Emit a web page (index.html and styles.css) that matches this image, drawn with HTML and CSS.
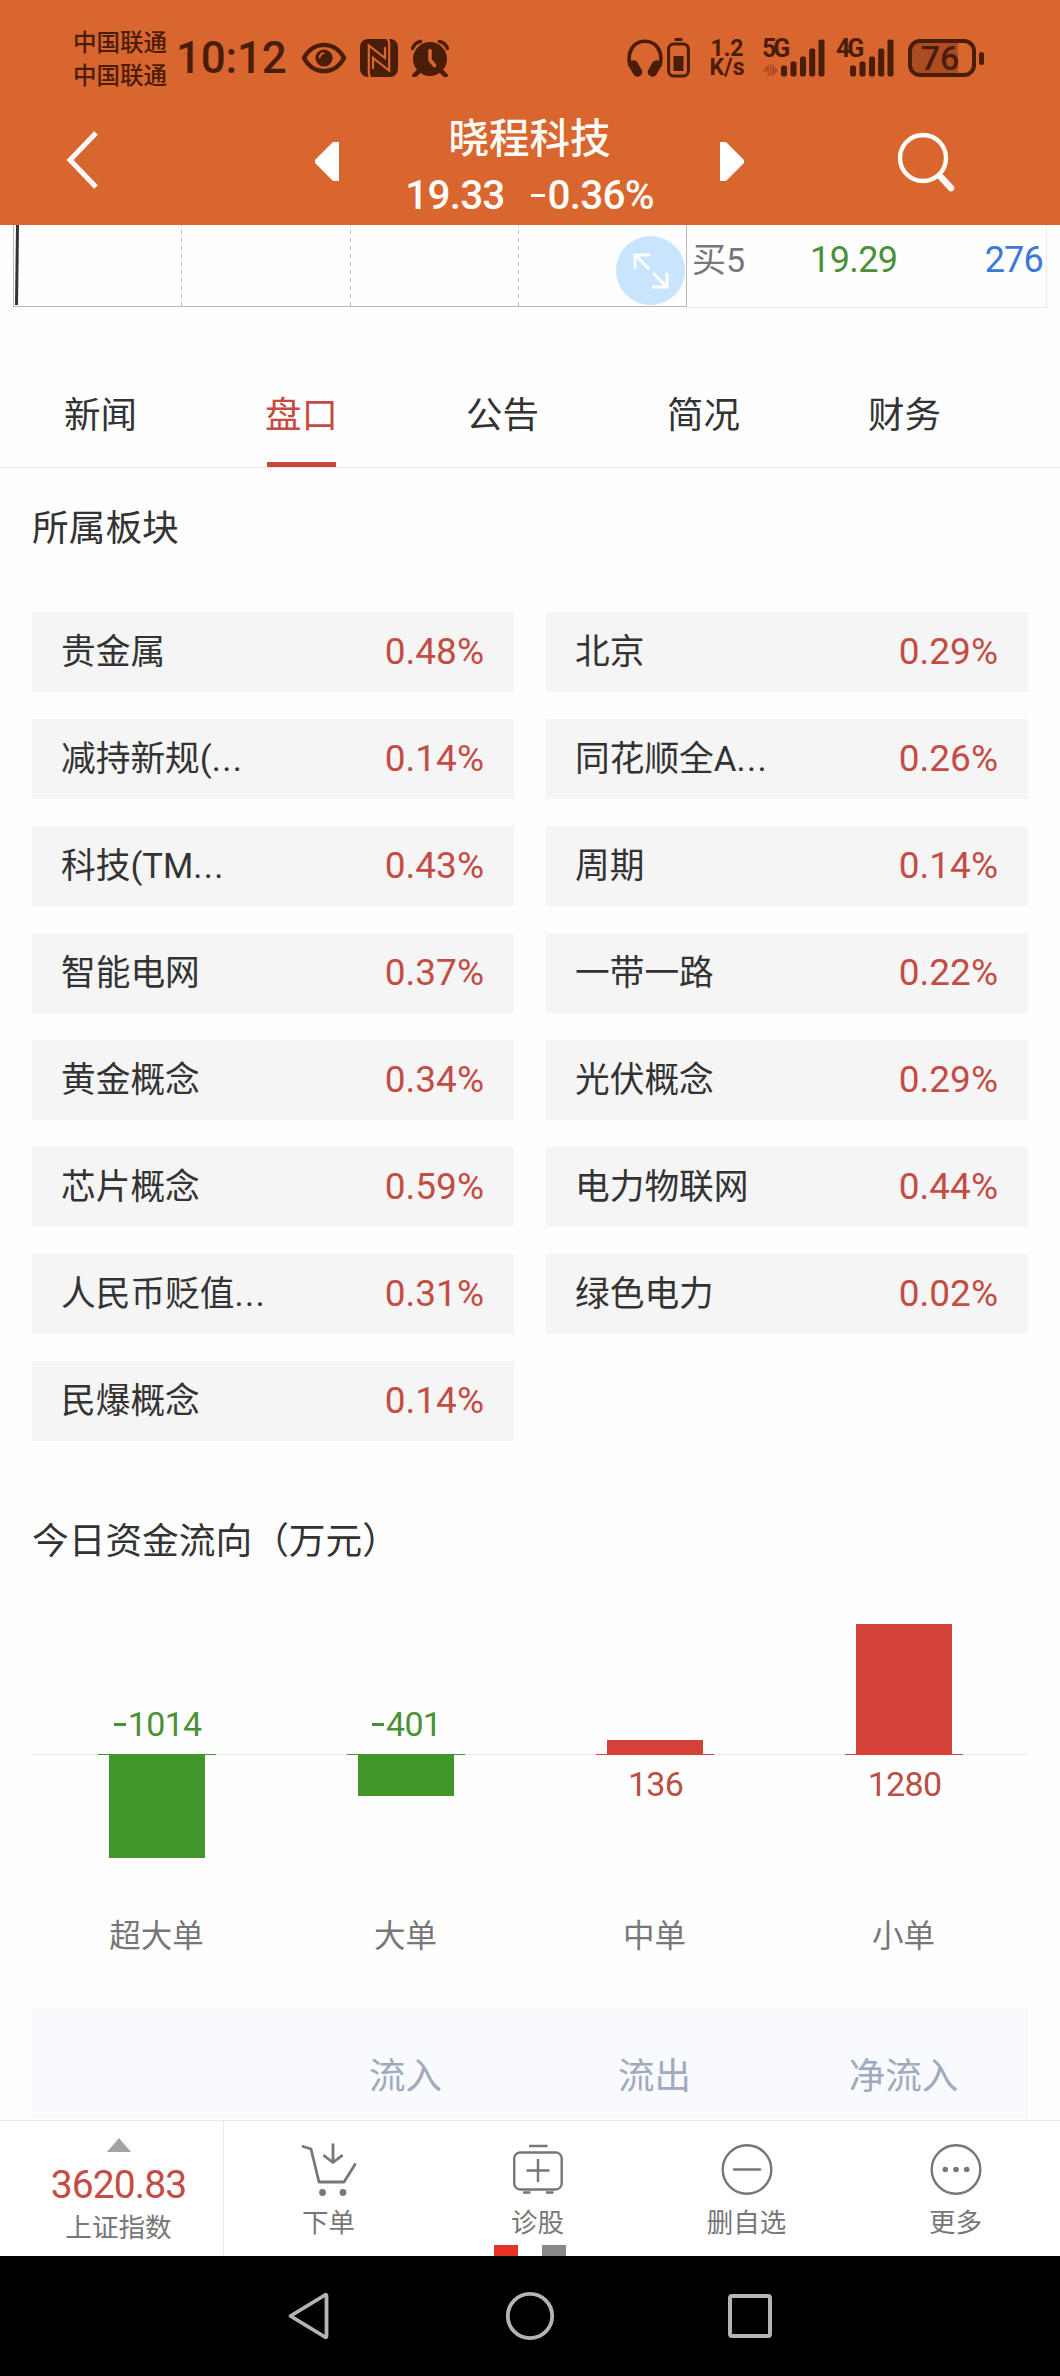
FILE: index.html
```html
<!DOCTYPE html>
<html lang="zh-CN">
<head>
<meta charset="utf-8">
<title>晓程科技</title>
<link rel="stylesheet" href="styles.css">
</head>
<body>
<header class="header">
  <div class="status">
    <div class="carriers"><span>中国联通</span><span>中国联通</span></div>
    <div class="clock">10:12</div>
    <svg class="ic-eye" width="46" height="32" viewBox="0 0 46 32">
      <path d="M3 16C12-1.5 34-1.5 43 16C34 33.5 12 33.5 3 16Z" fill="none" stroke="currentColor" stroke-width="4.4" stroke-linejoin="round"/>
      <circle cx="23" cy="16" r="8.6" fill="currentColor"/>
      <path d="M18.6 15.4q.6-3.600 4-4.200" fill="none" stroke="#d9652f" stroke-width="1.800" stroke-linecap="round"/>
    </svg>
    <svg class="ic-nfc" width="38" height="38" viewBox="0 0 38 38">
      <rect width="38" height="38" rx="8" fill="currentColor"/>
      <path d="M10.500 38.500Q8.800 37 8.800 33V6.500L25 19V8" fill="none" stroke="#d9652f" stroke-width="2.200"/>
      <path d="M27-.5Q29.200 1 29.200 5V31.500L13 19V30" fill="none" stroke="#d9652f" stroke-width="2.200"/>
    </svg>
    <svg class="ic-alarm" width="38" height="38" viewBox="0 0 38 38">
      <circle cx="19" cy="20" r="17" fill="currentColor"/>
      <path d="M7 33l-3.500 3.500M31 33l3.500 3.500" stroke="currentColor" stroke-width="4.600" stroke-linecap="round"/>
      <path d="M1.500 9.500Q3.500 4 9.500 2.500M36.500 9.500Q34.500 4 28.500 2.500" fill="none" stroke="currentColor" stroke-width="3.400" stroke-linecap="round"/>
      <path d="M19 11.500V21l4.500 5.500" fill="none" stroke="#d9652f" stroke-width="3.600" stroke-linecap="round" stroke-linejoin="round"/>
    </svg>
    <svg class="ic-phones" width="36" height="38" viewBox="0 0 36 38">
      <path d="M3 27C-.5 12 7 2.200 18 2.200S36.500 12 33 27" fill="none" stroke="currentColor" stroke-width="3.600"/>
      <path d="M6.500 26l4 7M29.500 26l-4 7" stroke="currentColor" stroke-width="9.500" stroke-linecap="round"/>
    </svg>
    <svg class="ic-cell" width="23" height="40" viewBox="0 0 23 40">
      <rect x="7.500" width="8" height="3" rx="1.200" fill="currentColor"/>
      <rect x="1.600" y="6" width="19.800" height="32" rx="5" fill="none" stroke="currentColor" stroke-width="3"/>
      <rect x="6.500" y="18" width="10" height="15" fill="currentColor"/>
    </svg>
    <div class="speed"><span>1.2</span><span>K/s</span></div>
    <div class="signal signal-5g">
      <span class="gen">5G</span>
      <svg width="62" height="38" viewBox="0 0 62 38">
        <path d="M0 31l6-6v12H4.500v-4.500H0zM15 31.500L9 25v12.500zM7 25h1.500v12H7z" fill="#b04e22"/>
        <g fill="currentColor"><rect x="18" y="26.500" width="6" height="11" rx="2"/><rect x="27.500" y="22.500" width="6" height="15" rx="2"/><rect x="37" y="17.500" width="6" height="20" rx="2"/><rect x="46.200" y="9.500" width="6" height="28" rx="2"/><rect x="55.500" y=".5" width="6" height="37" rx="2"/></g>
      </svg>
    </div>
    <div class="signal signal-4g">
      <span class="gen">4G</span>
      <svg width="62" height="38" viewBox="5 0 62 38">
        <g fill="currentColor"><rect x="18" y="26.500" width="6" height="11" rx="2"/><rect x="27.500" y="22.500" width="6" height="15" rx="2"/><rect x="37" y="17.500" width="6" height="20" rx="2"/><rect x="46.200" y="9.500" width="6" height="28" rx="2"/><rect x="55.500" y=".5" width="6" height="37" rx="2"/></g>
      </svg>
    </div>
    <div class="battery"><span>76</span></div>
    <div class="nub"></div>
  </div>
  <div class="titlebar">
    <svg class="ic-back" width="34" height="60" viewBox="0 0 34 60"><path d="M30 3L4 30L30 57" fill="none" stroke="#fff" stroke-width="5"/></svg>
    <svg class="ic-prev" width="24" height="39" viewBox="0 0 24 39"><path d="M24 0H18L0 18v3L18 39h6z" fill="#fff"/></svg>
    <div class="stock">
      <div class="name">晓程科技</div>
      <div class="price"><span>19.33</span><span><i class="minus"></i>0.36%</span></div>
    </div>
    <svg class="ic-next" width="24" height="39" viewBox="0 0 24 39"><path d="M0 0h6L24 18v3L6 39H0z" fill="#fff"/></svg>
    <svg class="ic-search" width="60" height="62" viewBox="0 0 60 62"><circle cx="26" cy="26" r="23" fill="none" stroke="#fffdf8" stroke-width="4.400"/><path d="M42 43L41 42L54 56" stroke="#fffdf8" stroke-width="6.500" stroke-linecap="round"/></svg>
  </div>
</header>

<section class="quote">
  <div class="chart">
    <svg width="674" height="82" viewBox="0 0 674 82">
      <path d="M3.500 0L2.500 80" stroke="#333" stroke-width="3"/>
      <path d="M167.500-3V82M336.500-3V82M504.500-3V82" stroke="#c4c4c4" stroke-dasharray="4.500 3.500"/>
    </svg>
    <div class="expand">
      <svg width="36" height="36" viewBox="0 0 36 36"><path d="M2 16V2H17M2 2L16 16M34 20V34H19M34 34L20 20" fill="none" stroke="#fff" stroke-width="3"/></svg>
    </div>
  </div>
  <div class="bid"><span class="bid-name">买5</span><span class="bid-price">19.29</span><span class="bid-vol">276</span></div>
</section>

<nav class="tabs">
  <a>新闻</a><a class="active">盘口</a><a>公告</a><a>简况</a><a>财务</a>
</nav>

<main class="content">
  <h2>所属板块</h2>
  <div class="plates">
    <div class="plate"><span>贵金属</span><b>0.48%</b></div>
    <div class="plate"><span>北京</span><b>0.29%</b></div>
    <div class="plate"><span>减持新规(<i class="dots">...</i></span><b>0.14%</b></div>
    <div class="plate"><span>同花顺全A<i class="dots">...</i></span><b>0.26%</b></div>
    <div class="plate"><span>科技(TM<i class="dots">...</i></span><b>0.43%</b></div>
    <div class="plate"><span>周期</span><b>0.14%</b></div>
    <div class="plate"><span>智能电网</span><b>0.37%</b></div>
    <div class="plate"><span>一带一路</span><b>0.22%</b></div>
    <div class="plate"><span>黄金概念</span><b>0.34%</b></div>
    <div class="plate"><span>光伏概念</span><b>0.29%</b></div>
    <div class="plate"><span>芯片概念</span><b>0.59%</b></div>
    <div class="plate"><span>电力物联网</span><b>0.44%</b></div>
    <div class="plate"><span>人民币贬值<i class="dots">...</i></span><b>0.31%</b></div>
    <div class="plate"><span>绿色电力</span><b>0.02%</b></div>
    <div class="plate"><span>民爆概念</span><b>0.14%</b></div>
  </div>
  <h2 class="flow-title">今日资金流向（万元）</h2>
  <div class="flow">
    <div class="col down">
      <div class="above"><span class="val"><i class="minus"></i>1014</span></div>
      <div class="below"><div class="bar" style="height:103px"></div></div>
      <div class="label">超大单</div>
    </div>
    <div class="col down">
      <div class="above"><span class="val"><i class="minus"></i>401</span></div>
      <div class="below"><div class="bar" style="height:41px"></div></div>
      <div class="label">大单</div>
    </div>
    <div class="col up">
      <div class="above"><div class="bar" style="height:14px"></div></div>
      <div class="below"><span class="val">136</span></div>
      <div class="label">中单</div>
    </div>
    <div class="col up">
      <div class="above"><div class="bar" style="height:130px"></div></div>
      <div class="below"><span class="val">1280</span></div>
      <div class="label">小单</div>
    </div>
  </div>
  <div class="thead"><span></span><span>流入</span><span>流出</span><span>净流入</span></div>
</main>

<footer class="toolbar">
  <div class="index">
    <svg width="24" height="14" viewBox="0 0 24 14"><path d="M12 0L24 14H0z" fill="#a3a3a3"/></svg>
    <div class="index-val">3620.83</div>
    <div class="index-name">上证指数</div>
  </div>
  <div class="tool">
    <svg width="56" height="56" viewBox="0 0 56 56"><g fill="none" stroke="#777" stroke-width="2.800" stroke-linecap="round" stroke-linejoin="round"><path d="M2 4.500L10 7L18 40H43L54 22.500"/><path d="M32 3V20M23.500 14L32 20.500L40.500 14" stroke-linecap="square"/></g><circle cx="21.500" cy="50.500" r="3.400" fill="#777"/><circle cx="42" cy="50.500" r="3.400" fill="#777"/></svg>
    <span>下单</span>
  </div>
  <div class="tool">
    <svg width="56" height="56" viewBox="0 0 56 56"><g fill="none" stroke="#777" stroke-width="2.400"><rect x="4.200" y="10.500" width="47.500" height="37" rx="6"/><path d="M19 4H37.500M13 50.500H20.500M36 50.500H43.500M16.500 28.500H39.500M28 17V40"/></g></svg>
    <span>诊股</span>
  </div>
  <div class="tool">
    <svg width="56" height="56" viewBox="0 0 56 56"><g fill="none" stroke="#777" stroke-width="2.400" stroke-linecap="round"><circle cx="28" cy="27.500" r="24.300"/><path d="M15 27.500H41"/></g></svg>
    <span>删自选</span>
  </div>
  <div class="tool">
    <svg width="56" height="56" viewBox="0 0 56 56"><circle cx="28" cy="27.500" r="24.300" fill="none" stroke="#777" stroke-width="2.400"/><g fill="#777"><circle cx="17.300" cy="27.500" r="2.800"/><circle cx="28" cy="27.500" r="2.800"/><circle cx="38.700" cy="27.500" r="2.800"/></g></svg>
    <span>更多</span>
  </div>
  <div class="pages"><i class="on"></i><i></i></div>
</footer>

<div class="sysnav">
  <svg width="50" height="50" viewBox="0 0 50 50"><path d="M5.500 25L40 4Q41.500 3 41.500 5V45Q41.500 47 40 46Z" fill="none" stroke="#b4b4b4" stroke-width="3.800" stroke-linejoin="round"/></svg>
  <svg width="50" height="50" viewBox="0 0 50 50"><circle cx="25" cy="25" r="22.200" fill="none" stroke="#b4b4b4" stroke-width="3.800"/></svg>
  <svg width="50" height="50" viewBox="0 0 50 50"><rect x="5" y="5" width="40" height="40" rx="2" fill="none" stroke="#b4b4b4" stroke-width="4"/></svg>
</div>
</body>
</html>
```

FILE: styles.css
```css
* { box-sizing: border-box; }
body {
  margin: 0;
  width: 1060px;
  height: 2376px;
  overflow: hidden;
  display: flex;
  flex-direction: column;
  background: #fefefe;
  color: #333;
  font-family: Roboto, "Noto Sans CJK SC", sans-serif;
}
svg { display: block; flex: none; }
i { font-style: normal; }

/* header */
.header { height: 225px; flex: none; background: #d9652f; color: #fffdf8; }
.status { display: flex; height: 116px; align-items: center; padding-left: 73px; color: #4a1d08; }
.carriers { display: flex; flex-direction: column; width: 103px; padding-top: 3px; font-size: 23.5px; line-height: 33px; font-weight: 500; white-space: nowrap; }
.clock { width: 123px; font-size: 44px; line-height: 50px; font-weight: 500; letter-spacing: -.2px; white-space: nowrap; }
.ic-eye { margin-left: 2px; }
.ic-nfc { margin-left: 13px; }
.ic-alarm { margin-left: 13px; }
.ic-phones { margin-left: 178px; }
.ic-cell { margin-left: 4px; }
.speed { display: flex; flex-direction: column; align-items: center; width: 42px; margin-left: 16px; font-size: 23px; line-height: 19px; font-weight: 700; }
.speed span { height: 19px; }
.signal { position: relative; }
.signal svg { color: #4a1d08; }
.signal-5g { margin-left: 15px; }
.signal-4g { margin-left: 12px; }
.gen { position: absolute; left: -1px; top: 0; font-size: 25px; line-height: 19px; font-weight: 700; letter-spacing: -3px; }
.battery { width: 68px; height: 38px; margin-left: 9px; border: 4px solid #4a1d08; border-radius: 12px; background: linear-gradient(90deg, #ab4c22 0 46px, transparent 46px); font-size: 34px; line-height: 31px; font-weight: 500; text-align: center; padding-right: 4px; }
.nub { width: 5px; height: 13px; margin-left: 3px; border-radius: 3px; background: #4a1d08; }
.titlebar { display: flex; height: 109px; padding-left: 66px; }
.ic-back { margin-top: 14px; }
.ic-prev { margin: 26px 0 0 215px; }
.stock { width: 381px; text-align: center; white-space: nowrap; }
.name { font-size: 40.5px; line-height: 50px; font-weight: 500; margin-top: -2px; }
.price { display: flex; justify-content: center; gap: 26px; font-size: 40.5px; line-height: 50px; font-weight: 500; margin-top: 6px; letter-spacing: -.8px; }
.minus { display: inline-block; width: .36em; height: .085em; background: currentColor; vertical-align: .29em; margin-right: .06em; }
.ic-next { margin-top: 26px; }
.ic-search { margin: 16px 0 0 153px; }

/* quote strip */
.quote { display: flex; height: 83px; flex: none; padding-left: 13px; }
.chart { position: relative; width: 674px; height: 82px; border: solid #b8b8b8; border-width: 0 1px 1px 1px; }
.expand { position: absolute; right: 1px; top: 11px; width: 69px; height: 69px; border-radius: 50%; background: #c8e5fd; display: flex; align-items: center; justify-content: center; }
.bid { display: flex; width: 360px; height: 83px; border: solid #ececec; border-width: 0 1px 1px 0; padding: 10px 3px 0 5px; font-size: 36px; line-height: 50px; }
.bid-name { width: 118px; color: #777; font-size: 34px; }
.bid-price { flex: 1; color: #4a9136; letter-spacing: -.6px; }
.bid-vol { color: #3d78d8; letter-spacing: -.8px; }

/* tabs */
.tabs { display: flex; height: 160px; flex: none; border-bottom: 1px solid #e8e8e8; }
.tabs a { width: 201px; padding-top: 83px; display: flex; flex-direction: column; align-items: center; justify-content: space-between; font-size: 36.5px; line-height: 50px; }
.tabs .active { color: #c64c43; }
.tabs .active::after { content: ""; width: 69px; height: 5px; background: #c84840; }

/* content */
.content { flex: none; height: 1652px; padding: 0 32px; overflow: hidden; }
h2 { margin: 36px 0 0; font-size: 36.7px; line-height: 50px; font-weight: 400; height: 50px; white-space: nowrap; }
.plates { display: grid; grid-template-columns: 482px 482px; grid-auto-rows: 80px; gap: 27px 32px; margin-top: 58px; }
.plate { display: flex; justify-content: space-between; align-items: center; padding: 0 30px 0 29px; background: #f5f5f5; font-size: 34.7px; line-height: 50px; white-space: nowrap; }
.plate b { font-size: 37px; font-weight: 400; color: #c34c44; }
.dots { letter-spacing: 1.4px; }
.flow-title { margin-top: 76px; }
.flow { display: flex; margin-top: 56px; height: 385px; background: linear-gradient(#ececec, #ececec) 0 131px / 100% 1px no-repeat; }
.col { flex: 1; display: flex; flex-direction: column; align-items: center; }
.above, .below { width: 118px; display: flex; flex-direction: column; align-items: center; }
.above { height: 132px; justify-content: flex-end; }
.below { height: 157px; }
.bar { width: 96px; }
.val { font-size: 34px; line-height: 40px; white-space: nowrap; letter-spacing: -.7px; padding-left: 2px; }
.down { color: #4a9136; }
.down .above { border-bottom: 1px solid #43962a; padding-bottom: 10px; }
.down .bar { background: #43962a; }
.up { color: #b94f47; }
.up .above { border-bottom: 1px solid #d44139; }
.up .bar { background: #d44139; }
.up .below { padding-top: 9px; }
.label { color: #777; font-size: 31.5px; line-height: 50px; }
.thead { display: flex; height: 111px; background: #f9fafd; color: #a0aabf; font-size: 36.5px; line-height: 50px; padding-top: 44px; }
.thead span { flex: 1; text-align: center; }

/* toolbar */
.toolbar { position: relative; display: flex; flex: none; height: 136px; border-top: 1px solid #e8e8e8; background: #fff; color: #777; }
.index { width: 224px; border-right: 1px solid #e8e8e8; display: flex; flex-direction: column; align-items: center; padding: 17px 0 0 14px; }
.index-val { margin-top: 11px; font-size: 39px; line-height: 44px; color: #c34c44; letter-spacing: -.9px; }
.index-name { font-size: 26.6px; line-height: 40px; margin-top: 1px; }
.tool { flex: 1; display: flex; flex-direction: column; align-items: center; padding-top: 21px; font-size: 26.5px; line-height: 40px; }
.tool span { margin-top: 5px; }
.pages { position: absolute; left: 494px; bottom: 0; display: flex; gap: 24px; }
.pages i { width: 24px; height: 11px; background: #888; }
.pages .on { background: #e93226; }

/* system navigation */
.sysnav { flex: none; height: 120px; background: #000; display: flex; justify-content: center; align-items: center; gap: 170px; }
```
